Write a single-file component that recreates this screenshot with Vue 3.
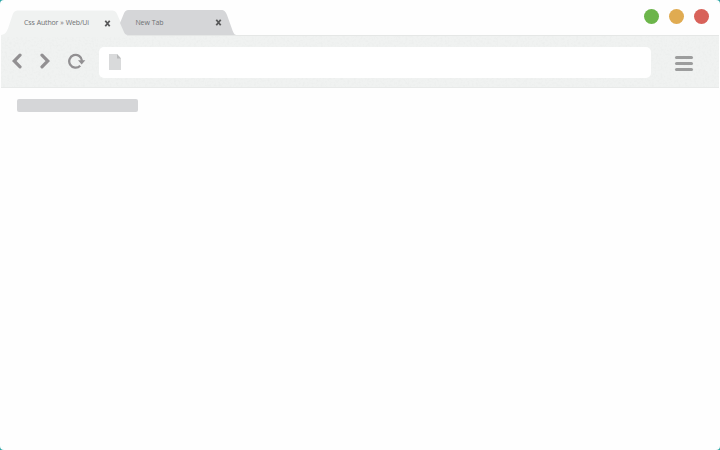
<template>
  <div class="desktop">
    <div class="browser">
      <header class="tab-bar">
        <div class="tabs">
          <div v-for="tab in tabs" :key="tab.id" class="tab" :class="{ active: tab.id === activeTab }" @click="activeTab = tab.id">
            <svg class="tab-shape" width="126" height="27" viewBox="0 0 126 27">
              <path :d="tab.shape" />
            </svg>
            <span class="tab-title">{{ tab.title }}</span>
            <svg class="tab-close" width="7" height="7" viewBox="0 0 7 7">
              <path d="M1.3 .7L5.7 6.3M5.7 .7L1.3 6.3" />
            </svg>
          </div>
        </div>
        <div class="window-buttons">
          <span v-for="color in ['green', 'yellow', 'red']" :key="color" class="dot" :class="color"></span>
        </div>
      </header>

      <nav class="toolbar">
        <svg class="grain" width="718" height="51">
          <filter id="paper" x="0" y="0" width="100%" height="100%">
            <feTurbulence type="fractalNoise" baseFrequency="0.45" numOctaves="2" seed="4" />
            <feColorMatrix values="0 0 0 0 0.45  0 0 0 0 0.48  0 0 0 0 0.47  0.16 0 0 0 -0.07" />
          </filter>
          <rect width="718" height="51" filter="url(#paper)" />
        </svg>
        <div class="nav-icons">
          <svg width="10" height="16" viewBox="0 0 10 16">
            <path class="chevron" d="M8 2.200L2.200 8L8 13.800" />
          </svg>
          <svg width="10" height="16" viewBox="0 0 10 16">
            <path class="chevron" d="M2 2.200L7.800 8L2 13.800" />
          </svg>
          <svg width="18" height="16" viewBox="0 0 18 16">
            <path class="arc" d="M12.200 12.700A6.400 6.400 0 1 1 14 7.800" />
            <path class="head" d="M10 7.300H17.300L13.700 11.500Z" />
          </svg>
        </div>
        <div class="address">
          <svg width="12" height="16" viewBox="0 0 12 16">
            <path d="M0 0H8L12 4.6V16H0Z" fill="#d9dadb" />
            <path d="M8 0L12 4.6H8Z" fill="#b9babb" />
          </svg>
        </div>
        <div class="menu"><i></i><i></i><i></i></div>
      </nav>

      <main class="page">
        <div class="placeholder"></div>
      </main>
    </div>
  </div>
</template>

<script setup>
import { ref } from 'vue';

const activeTab = ref(1);

const tabs = [
  {
    id: 1,
    title: 'Css Author » Web/Ui',
    shape: 'M0 27V25C4 24.5 5.5 22 7 18.5L11.5 5C13 1.5 14 .5 18 .5H110C114 .5 115 1.5 116.5 5L119.5 12L126 20V27Z'
  },
  {
    id: 2,
    title: 'New Tab',
    shape: 'M0 13L3.5 4.5C5 1 6 0 9 0H101C104.5 0 105.5 1.5 107 5L112 19C113.5 23 114 24.5 116.5 25H8C5.5 25 4.5 23.5 3.5 21Z'
  }
];
</script>

<style>
body {
  background: #2ba5a5;
}
</style>

<style scoped>
.desktop {
  height: 450px;
  background: #2ba5a5;
  overflow: hidden;
}

.browser {
  height: 450px;
  display: flex;
  flex-direction: column;
  background: #fefefe;
  border-radius: 4px;
  overflow: hidden;
  font-family: 'Open Sans', 'Noto Sans', sans-serif;
}

.tab-bar {
  position: relative;
  z-index: 1;
  height: 35px;
  display: flex;
  justify-content: space-between;
  padding: 0 11.5px 0 1px;
}

.tabs {
  display: flex;
  align-items: flex-end;
}

.tab {
  position: relative;
  z-index: 2;
  width: 118px;
  height: 25px;
  box-sizing: border-box;
  display: flex;
  align-items: center;
  justify-content: space-between;
  padding: 0 16px 0 15.5px;
  cursor: pointer;
}

.tab.active {
  z-index: 1;
  width: 119px;
  padding: 1px 9px 0 23px;
}

.tab-shape {
  position: absolute;
  left: 0;
  top: 0;
  fill: #d5d6d8;
}

.active .tab-shape {
  fill: #f0f2f1;
}

.tab-title {
  position: relative;
  font-size: 7px;
  line-height: 10px;
  letter-spacing: -0.15px;
  word-spacing: 0.35px;
  white-space: nowrap;
  color: #6f7173;
}

.tab-close {
  position: relative;
  fill: none;
  stroke: #58595a;
  stroke-width: 1.8;
}

.window-buttons {
  display: flex;
  gap: 10px;
  padding-top: 9px;
}

.dot {
  width: 15px;
  height: 15px;
  border-radius: 50%;
}

.green {
  background: #6cb54a;
}

.yellow {
  background: #e0ab51;
}

.red {
  background: #d8625a;
}

.toolbar {
  position: relative;
  height: 53px;
  box-sizing: border-box;
  display: flex;
  align-items: center;
  margin: 0 1px;
  padding: 0 26.5px 0 10.5px;
  background: #f0f2f1;
  border-top: 1px solid #e5e7e6;
  border-bottom: 1px solid #e8eae9;
}

.grain {
  position: absolute;
  left: 0;
  top: 0;
}

.nav-icons {
  position: relative;
  display: flex;
  gap: 18px;
  width: 87.5px;
  margin-bottom: 1px;
}

.chevron {
  fill: none;
  stroke: #929092;
  stroke-width: 3.2;
  stroke-linecap: round;
}

.arc {
  fill: none;
  stroke: #929092;
  stroke-width: 2.3;
}

.head {
  fill: #929092;
}

.address {
  position: relative;
  width: 552px;
  height: 31px;
  box-sizing: border-box;
  display: flex;
  align-items: center;
  margin-top: 1px;
  padding: 0 10px 1px;
  background: #fff;
  border-radius: 5px;
}

.menu {
  position: relative;
  display: flex;
  flex-direction: column;
  gap: 3px;
  width: 18px;
  margin: 3px 0 0 auto;
}

.menu i {
  height: 3px;
  border-radius: 2px;
  background: #9c9d9d;
}

.page {
  flex: 1;
  padding: 11px 17px;
}

.placeholder {
  width: 121px;
  height: 13px;
  border-radius: 2px;
  background: #d5d6d8;
}
</style>
